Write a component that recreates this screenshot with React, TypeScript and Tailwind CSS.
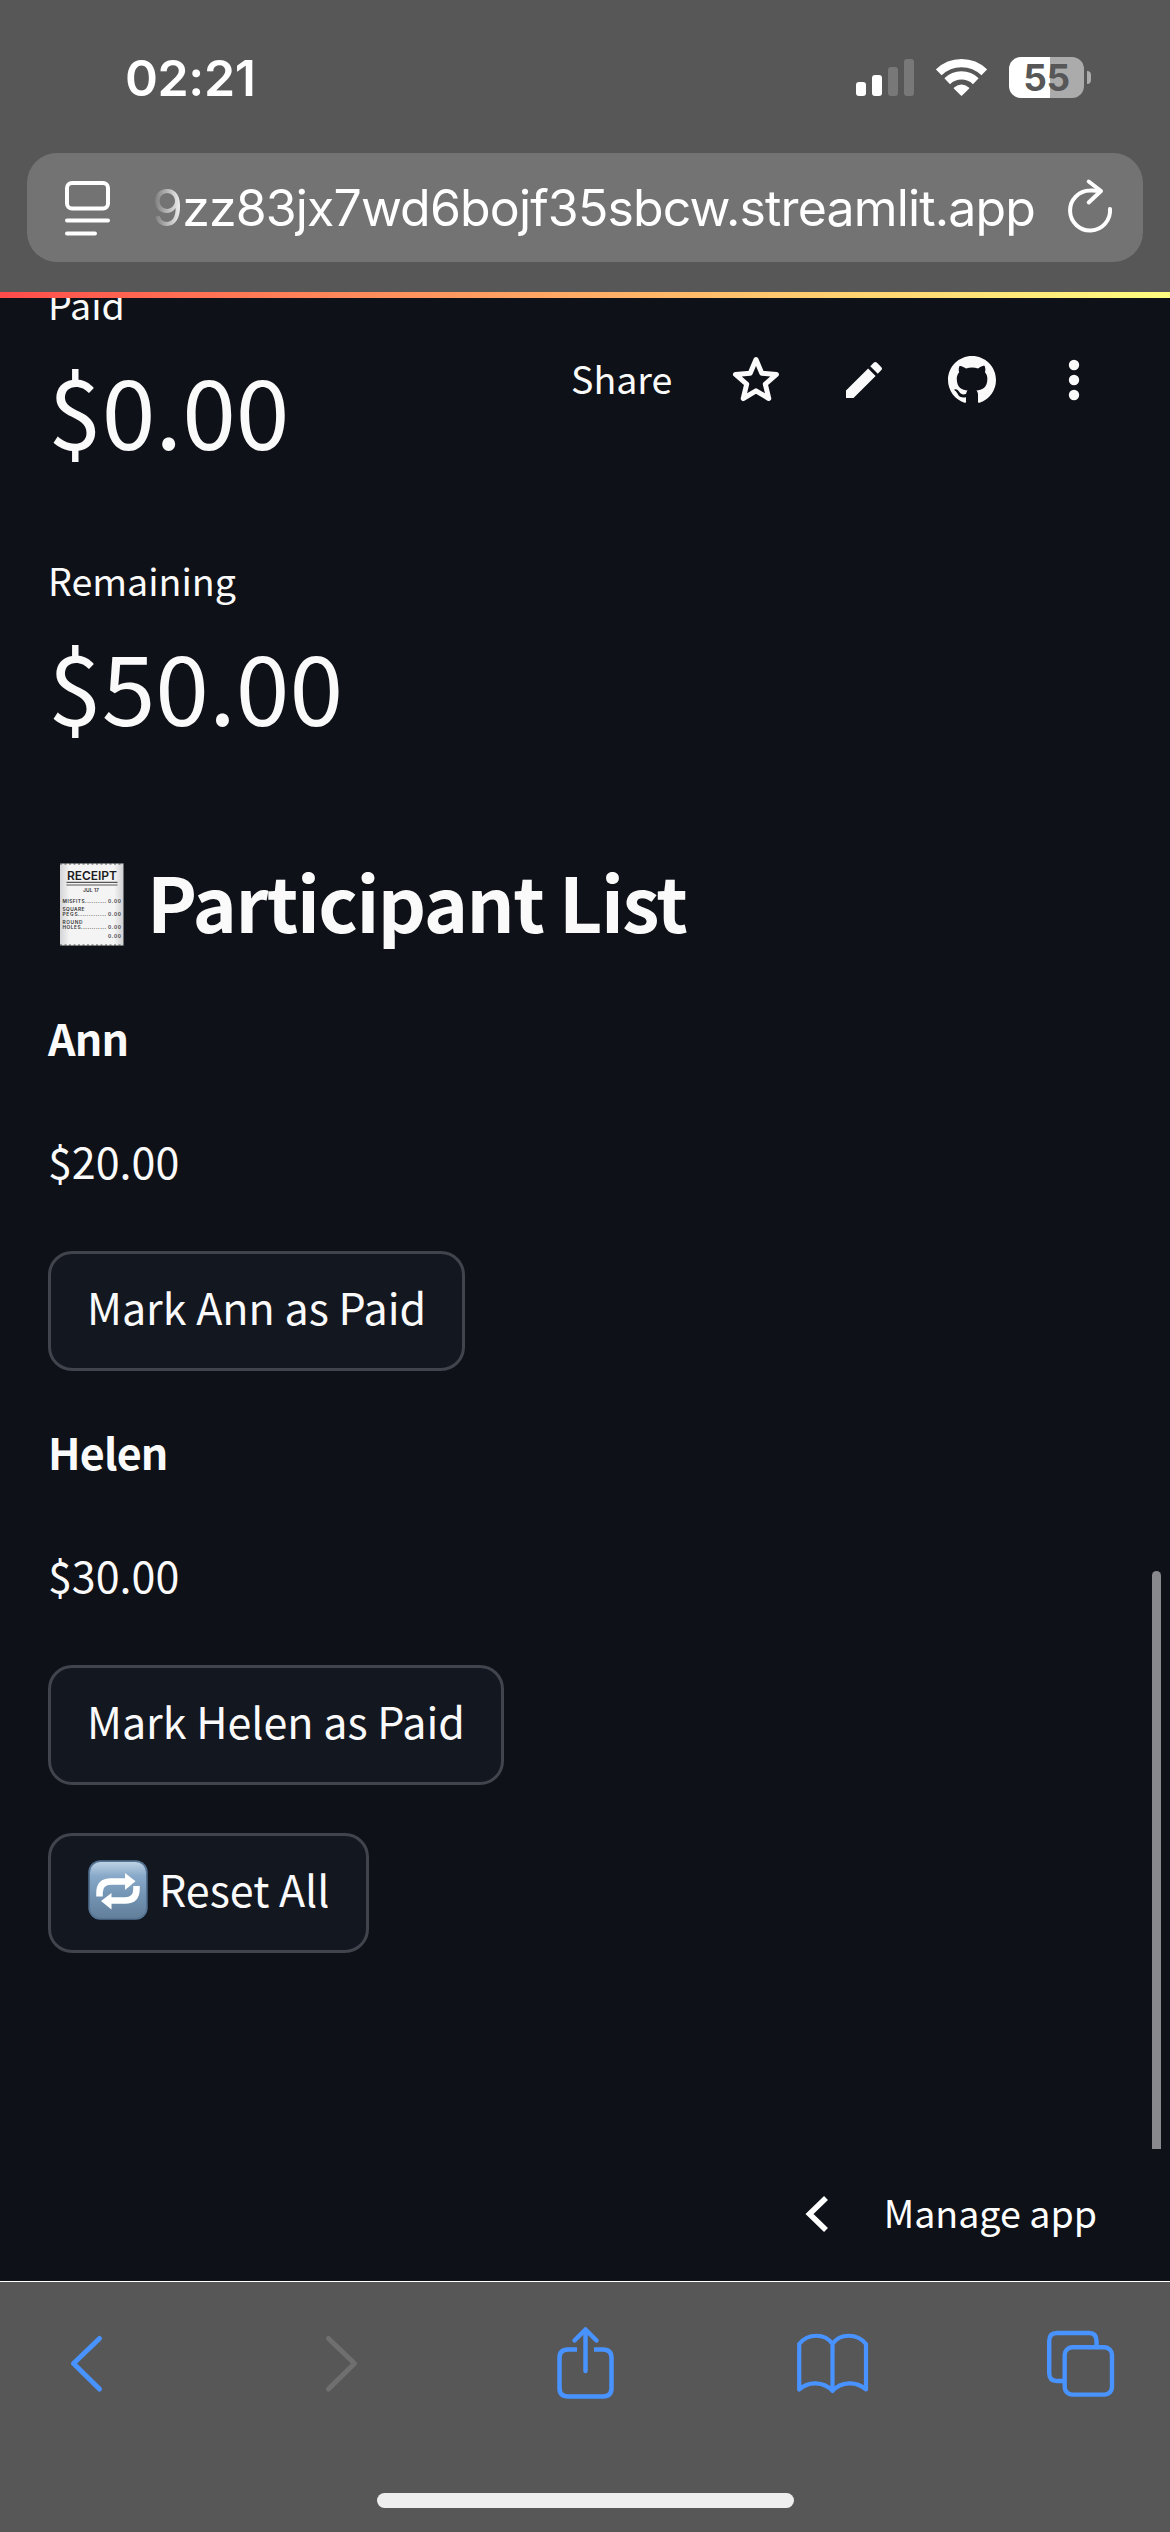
import { useState } from "react";

const initialPeople = [
  { name: "Ann", amount: 20, paid: false },
  { name: "Helen", amount: 30, paid: false },
];

const money = (value: number) => `$${value.toFixed(2)}`;

function StatusBar() {
  return (
    <div className="flex h-[153px] items-start pt-12 pl-[125px]">
      <span className="h-[60px] w-[131px] text-[50px] leading-[60px] font-semibold tracking-[-0.4px] whitespace-nowrap">
        02:21
      </span>
      <div className="mt-[9px] ml-[600px] flex items-start">
        {/* Signal */}
        <svg width="59" height="41" viewBox="0 0 59 41" fill="#fff">
          <rect x="0" y="25" width="10" height="14" rx="3" />
          <rect x="16" y="18" width="10" height="21" rx="3" />
          <rect x="32" y="10" width="10" height="29" rx="3" opacity="0.2" />
          <rect x="48" y="2" width="10" height="37" rx="3" opacity="0.2" />
        </svg>
        {/* Wifi */}
        <svg className="mt-0.5 ml-[21px]" width="51" height="37" viewBox="0 0 51 37" fill="none" stroke="#fff" strokeWidth="8.2">
          <path d="M2.7 13.4A32.8 32.8 0 0 1 48.3 13.4" />
          <path d="M11.2 22.2A20.6 20.6 0 0 1 39.8 22.2" />
          <path d="M18.6 29.2Q25.5 23.6 32.4 29.2L25.5 36Z" fill="#fff" stroke="#fff" strokeWidth="1.6" strokeLinejoin="round" />
        </svg>
        {/* Battery */}
        <div className="ml-[22px] flex items-center">
          <div className="flex h-[41px] w-[75px] items-center justify-center rounded-[12px] bg-linear-to-r from-white from-[54.5%] to-[#ababab] to-[54.5%]">
            <span className="text-[37px] leading-none font-bold tracking-[-0.3px] text-[#575757]">55</span>
          </div>
          <div className="ml-[3px] h-[13px] w-1 rounded-r-full bg-[#ababab]" />
        </div>
      </div>
    </div>
  );
}

function AddressBar() {
  return (
    <div className="mx-[27px] flex h-[109px] items-center rounded-[30px] bg-[#737373] pl-[38px]">
      <svg width="46" height="56" viewBox="0 0 46 56" fill="none" stroke="#fff" strokeWidth="4" strokeLinecap="round" strokeLinejoin="round">
        <rect x="2" y="3" width="41" height="25.5" rx="5" />
        <path d="M2 40.5H43M2 53.5H30" />
      </svg>
      <span className="ml-[41px] w-[891px] text-[50px] leading-[60px] tracking-[-0.85px] whitespace-nowrap [mask-image:linear-gradient(to_right,transparent,black_32px)]">
        9zz83jx7wd6bojf35sbcw.streamlit.app
      </span>
      <svg className="ml-[22px]" width="50" height="60" viewBox="0 0 50 60" fill="none" stroke="#fff" strokeWidth="4" strokeLinecap="round" strokeLinejoin="round">
        <path d="M45 31A20 20 0 1 1 25 12.5Q29 12.2 35 13" />
        <path d="M23.7 3.5L36 13L23.7 24.5" />
      </svg>
    </div>
  );
}

function Toolbar() {
  return (
    <div className="absolute top-[52px] left-[571px] flex h-[60px] items-center text-[37.6px] leading-[60px]">
      <span className="w-[159px] pb-[5px]">Share</span>
      <svg width="52" height="52" viewBox="0 0 52 52" fill="none" stroke="#fafafa" strokeWidth="5" strokeLinejoin="round">
        <path d="M26 5.5L31.8 19.2L46.5 20.4L35.3 30.1L38.8 44.5L26 36.8L13.2 44.5L16.7 30.1L5.5 20.4L20.2 19.2Z" />
      </svg>
      <svg className="ml-[58px]" width="48" height="48" viewBox="0 0 24 24" fill="#fafafa">
        <path d="M3 17.25V21h3.75L17.81 9.94l-3.75-3.75L3 17.25zM20.71 7.04a1 1 0 0 0 0-1.41l-2.34-2.34a1 1 0 0 0-1.41 0l-1.83 1.83 3.75 3.75 1.83-1.83z" />
      </svg>
      <svg className="ml-[60px]" width="48" height="48" viewBox="0 0 16 16" fill="#fafafa">
        <path d="M8 0C3.58 0 0 3.58 0 8c0 3.54 2.29 6.53 5.47 7.59.4.07.55-.17.55-.38 0-.19-.01-.82-.01-1.49-2.01.37-2.53-.49-2.69-.94-.09-.23-.48-.94-.82-1.13-.28-.15-.68-.52-.01-.53.63-.01 1.08.58 1.23.82.72 1.21 1.87.87 2.33.66.07-.52.28-.87.51-1.07-1.78-.2-3.64-.89-3.64-3.95 0-.87.31-1.59.82-2.15-.08-.2-.36-1.02.08-2.12 0 0 .67-.21 2.2.82.64-.18 1.32-.27 2-.27s1.36.09 2 .27c1.53-1.04 2.2-.82 2.2-.82.44 1.1.16 1.92.08 2.12.51.56.82 1.27.82 2.15 0 3.07-1.87 3.75-3.65 3.95.29.25.54.73.54 1.48 0 1.07-.01 1.93-.01 2.2 0 .21.15.46.55.38A8.01 8.01 0 0 0 16 8c0-4.42-3.58-8-8-8z" />
      </svg>
      <svg className="ml-[66px]" width="24" height="48" viewBox="0 0 24 48" fill="#fafafa">
        <circle cx="12" cy="9" r="5.2" />
        <circle cx="12" cy="24" r="5.2" />
        <circle cx="12" cy="39" r="5.2" />
      </svg>
    </div>
  );
}

function ReceiptIcon() {
  return (
    <svg className="tracking-normal" width="64" height="83" viewBox="0 0 64 83" fontFamily="Inter, sans-serif" fill="#333">
      <defs>
        <linearGradient id="paper" x1="0" x2="1" y1="0" y2="0">
          <stop offset="0" stopColor="#d4d4d6" />
          <stop offset="0.15" stopColor="#f4f4f5" />
          <stop offset="0.85" stopColor="#f4f4f5" />
          <stop offset="1" stopColor="#d0d0d2" />
        </linearGradient>
      </defs>
      <rect y="0.5" width="63.5" height="82" fill="url(#paper)" />
      <path d="M0 0.8H64M0 82.2H64" stroke="#555" strokeWidth="1.2" strokeDasharray="2 2.5" />
      <text x="7" y="16.5" fontSize="12" fontWeight="600" textLength="50" fill="#1c1c1e">RECEIPT</text>
      <path d="M6.5 19.3H57.5M6.5 22H57.5" stroke="#555" strokeWidth="1.2" />
      <text x="23" y="28.7" fontSize="5" fontWeight="600" textLength="16">JUL 17</text>
      <g fontSize="4.8" fontWeight="600">
        <text x="2.5" y="39.5" textLength="22">MISFITS</text>
        <text x="25" y="39.5" textLength="21">..........</text>
        <text x="48" y="39.5" textLength="13">0.00</text>
        <text x="2.5" y="48" textLength="22">SQUARE</text>
        <text x="2.5" y="52.8" textLength="15">PEGS</text>
        <text x="18" y="52.8" textLength="28">.............</text>
        <text x="48" y="52.8" textLength="13">0.00</text>
        <text x="2.5" y="61" textLength="20">ROUND</text>
        <text x="2.5" y="65.8" textLength="18">HOLES</text>
        <text x="21" y="65.8" textLength="25">............</text>
        <text x="48" y="65.8" textLength="13">0.00</text>
        <text x="48" y="75.3" textLength="13">0.00</text>
      </g>
    </svg>
  );
}

function RepeatIcon() {
  return (
    <svg width="60" height="60" viewBox="0 0 60 60">
      <defs>
        <linearGradient id="tile" x1="0" x2="0" y1="0" y2="1">
          <stop offset="0" stopColor="#bdd2e4" />
          <stop offset="0.25" stopColor="#88a9c9" />
          <stop offset="0.6" stopColor="#7494b4" />
          <stop offset="1" stopColor="#627f9a" />
        </linearGradient>
      </defs>
      <rect x="0.3" y="0.3" width="59.4" height="59.4" rx="12" fill="#557493" />
      <rect x="2" y="2" width="56" height="56" rx="10.5" fill="url(#tile)" />
      <g fill="none" stroke="#fff" strokeWidth="6.5">
        <path d="M11.5 36.5V33Q11.5 21.5 23 21.5H38" />
        <path d="M48.5 26V29Q48.5 40.5 37 40.5H22" />
      </g>
      <path d="M37 13L47.5 21.3L37 30Z" fill="#fff" />
      <path d="M23.5 33L13 41L23.5 49.5Z" fill="#fff" />
    </svg>
  );
}

function Metric({ label, value, className }: { label: string; value: string; className: string }) {
  return (
    <div className={className}>
      <p className="text-[37.6px] leading-[42px]">{label}</p>
      <p className="mt-[33px] text-[96.7px] leading-[100px]">{value}</p>
    </div>
  );
}

function Button({ children, onClick }: { children: React.ReactNode; onClick: () => void }) {
  return (
    <button
      onClick={onClick}
      className="flex h-[120px] items-center rounded-3xl border-3 border-[#41444c] bg-[#131720] px-9 pb-[11px] text-[43px] leading-[60px] whitespace-nowrap"
    >
      {children}
    </button>
  );
}

function BottomBar() {
  return (
    <div className="h-[251px] border-t border-white bg-[#575757]">
      <div className="flex h-[164px] items-center pl-[69px] text-[#4893ff]">
        <svg width="36" height="60" viewBox="0 0 36 60" fill="none" stroke="currentColor" strokeWidth="5" strokeLinecap="round" strokeLinejoin="round">
          <path d="M30.5 4.5L4.5 29.5L30.5 55" />
        </svg>
        <svg className="ml-[218px] text-[#6f6f6f]" width="36" height="60" viewBox="0 0 36 60" fill="none" stroke="currentColor" strokeWidth="5" strokeLinecap="round" strokeLinejoin="round">
          <path d="M5.5 4.5L31.5 29.5L5.5 55" />
        </svg>
        <svg className="-mt-[3px] ml-[196px]" width="60" height="76" viewBox="0 0 60 76" fill="none" stroke="currentColor" strokeWidth="4.5" strokeLinecap="round" strokeLinejoin="round">
          <path d="M22 24.5H13Q4.5 24.5 4.5 33V63Q4.5 71.5 13 71.5H48Q56.5 71.5 56.5 63V33Q56.5 24.5 48 24.5H39" strokeLinecap="butt" />
          <path d="M30.5 46V4.5M19.5 15.5L30.5 4.5L41.5 15.5" />
        </svg>
        <svg className="ml-[182px]" width="72" height="62" viewBox="0 0 72 62" fill="none" stroke="currentColor" strokeWidth="4.2" strokeLinecap="round" strokeLinejoin="round">
          <path d="M2.2 11C11 0 28 0 35.5 11C43 0 60 0 69 11V56.5C60 48 44 48 35.5 58C27 48 11 48 2.2 56.5ZM35.5 11V58" />
        </svg>
        <svg className="ml-[177px]" width="70" height="68" viewBox="0 0 70 68" fill="none" stroke="currentColor" strokeWidth="4.4">
          <path d="M17.5 51H11Q3.2 51 3.2 43V11Q3.2 3 11 3H43Q50.5 3 50.5 11V17" />
          <rect x="18.7" y="17.3" width="47.3" height="47.3" rx="7.5" />
        </svg>
      </div>
      <div className="mx-auto mt-[47px] h-[15px] w-[417px] rounded-full bg-[#eee]" />
    </div>
  );
}

export default function App() {
  const [people, setPeople] = useState(initialPeople);

  const sum = (paid: boolean) =>
    people.filter((p) => p.paid === paid).reduce((total, p) => total + p.amount, 0);

  const markPaid = (name: string) => {
    setPeople(people.map((p) => (p.name === name ? { ...p, paid: true } : p)));
  };

  return (
    <div className="flex h-[2532px] w-[1170px] flex-col overflow-hidden bg-[#0e1117] font-['Inter',sans-serif] text-white">
      <header className="h-[292px] shrink-0 bg-[#575757]">
        <StatusBar />
        <AddressBar />
      </header>
      <div className="h-1.5 shrink-0 bg-linear-to-r from-[#ff4b4b] to-[#fffd80]" />

      <main className="relative flex h-[1983px] shrink-0 flex-col overflow-hidden px-12 font-['Noto_Sans_CJK_SC',sans-serif] text-[#fafafa]">
        {/* The first metric is scrolled partly under the header */}
        <Metric className="-mt-[15px]" label="Paid" value={money(sum(true))} />
        <Metric className="mt-[101px]" label="Remaining" value={money(sum(false))} />

        <h2 className="mt-[121px] flex h-[90px] items-start pl-3 text-[75.2px] leading-[92px] font-bold tracking-[-1.5px] whitespace-nowrap">
          <span className="mt-2 mr-[23px]">
            <ReceiptIcon />
          </span>
          Participant List
        </h2>

        <div className="mt-[62px] flex flex-col gap-[50px]">
          {people.map((person) => (
            <div key={person.name} className="flex flex-col items-start text-[43px] leading-[60px]">
              <p className="font-bold tracking-[-0.8px]">{person.name}</p>
              <p className="mt-[63px] mb-[61px]">{money(person.amount)}</p>
              <Button onClick={() => markPaid(person.name)}>Mark {person.name} as Paid</Button>
            </div>
          ))}
        </div>

        <div className="mt-12 flex">
          <Button onClick={() => setPeople(initialPeople)}>
            <span className="mt-[5px] mr-[11px] ml-px">
              <RepeatIcon />
            </span>
            Reset All
          </Button>
        </div>

        <div className="mt-auto mb-[33px] flex h-[70px] items-center justify-end pr-[25px] text-[37.6px] leading-[60px] text-white">
          <svg className="mt-0.5 mr-[55px]" width="24" height="38" viewBox="0 0 24 38" fill="none" stroke="currentColor" strokeWidth="5.6">
            <path d="M21 3L4.5 19L21 35" />
          </svg>
          <span className="pb-[3px]">Manage app</span>
        </div>

        <Toolbar />
        <div className="absolute top-[1273px] right-[9px] h-[578px] w-[9px] rounded-t-full bg-[#88898c]" />
      </main>

      <BottomBar />
    </div>
  );
}
